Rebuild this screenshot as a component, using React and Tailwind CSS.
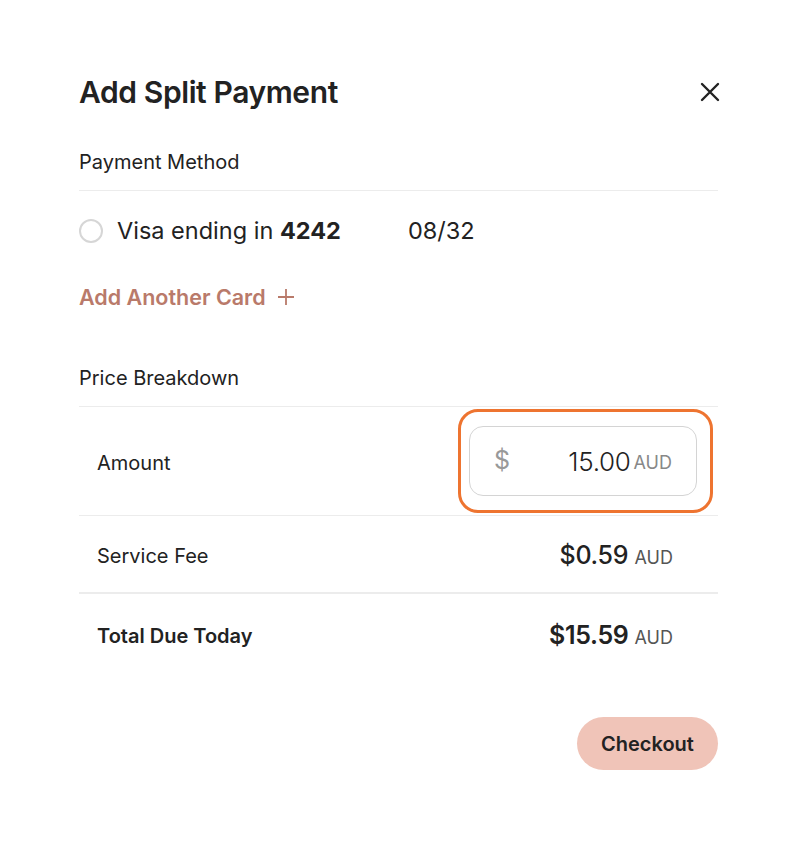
import { useState } from 'react'

function App() {
  const [amount, setAmount] = useState('15.00')

  return (
    <div className="min-h-[846px] w-full bg-white px-[78px] pt-[70px] font-['Inter',sans-serif] text-[#222222]">
      <div className="ml-px">
        <div className="flex h-11 items-center justify-between">
          <h1 className="text-[30px] font-semibold tracking-[-0.4px]">Add Split Payment</h1>
          <button className="mr-[-2px] flex h-5 w-5 items-center justify-center" aria-label="Close">
            <svg width="20" height="20" viewBox="0 0 20 20" fill="none" stroke="#222" strokeWidth="2.4" strokeLinecap="round">
              <path d="M2 2 L18 18 M18 2 L2 18" />
            </svg>
          </button>
        </div>

        <h2 className="mt-[34px] border-b border-[#ececec] pb-[14px] text-[20px] leading-7">Payment Method</h2>

        <label className="flex h-20 items-center">
          <span className="h-6 w-6 rounded-full border-2 border-[#d6d6d6]" />
          <span className="ml-[14px] w-[291px] text-[23.5px]">
            Visa ending in <span className="font-bold">4242</span>
          </span>
          <span className="text-[23.5px]">08/32</span>
        </label>

        <button className="mt-[12px] flex items-center gap-[11px] text-[21.5px] font-semibold leading-7 text-[#b97a6a]">
          Add Another Card
          <svg width="18" height="18" viewBox="0 0 18 18" fill="none" stroke="#b97a6a" strokeWidth="1.8">
            <path d="M9 1 V17 M1 9 H17" />
          </svg>
        </button>

        <h2 className="mt-[53px] border-b border-[#ececec] pb-[14px] text-[20px] leading-7">Price Breakdown</h2>

        <div className="flex items-center justify-between border-b border-[#ececec] py-[2px] pl-[18px]">
          <span className="pt-[3px] text-[20px]">Amount</span>
          <div className="mr-[5px] rounded-[20px] border-[3px] border-[#ee7430] py-[14px] pl-2 pr-[13px]">
            <div className="flex h-[70px] w-[228px] items-center rounded-[14px] border border-[#d4d4d4] pl-[24px] pr-[24px]">
              <span className="text-[25px] text-[#999999]">$</span>
              <input
                value={amount}
                onChange={(e) => setAmount(e.target.value)}
                className="ml-2 min-w-0 flex-1 bg-transparent text-right text-[26px] font-light tracking-[-0.3px] text-[#222] outline-none"
              />
              <span className="ml-[3px] pt-[3px] text-[18px] text-[#888888]">AUD</span>
            </div>
          </div>
        </div>

        <div className="flex h-[78px] items-center justify-between border-b-2 border-[#ececec] pl-[18px] pr-[45px] pt-[4px]">
          <span className="text-[20px]">Service Fee</span>
          <span className="text-[25px] font-medium tracking-[-0.3px]">
            $0.59 <span className="text-[18px] font-normal tracking-normal text-[#555]">AUD</span>
          </span>
        </div>

        <div className="flex h-[80px] items-center justify-between pl-[18px] pr-[45px] pt-[3px]">
          <span className="text-[20px] font-semibold">Total Due Today</span>
          <span className="text-[25px] font-semibold tracking-[-0.3px]">
            $15.59 <span className="text-[18px] font-normal tracking-normal text-[#555]">AUD</span>
          </span>
        </div>

        <div className="mt-[43px] flex justify-end">
          <button className="h-[53px] w-[141px] rounded-full bg-[#f0c4b8] text-[20px] font-semibold">Checkout</button>
        </div>
      </div>
    </div>
  )
}

export default App
